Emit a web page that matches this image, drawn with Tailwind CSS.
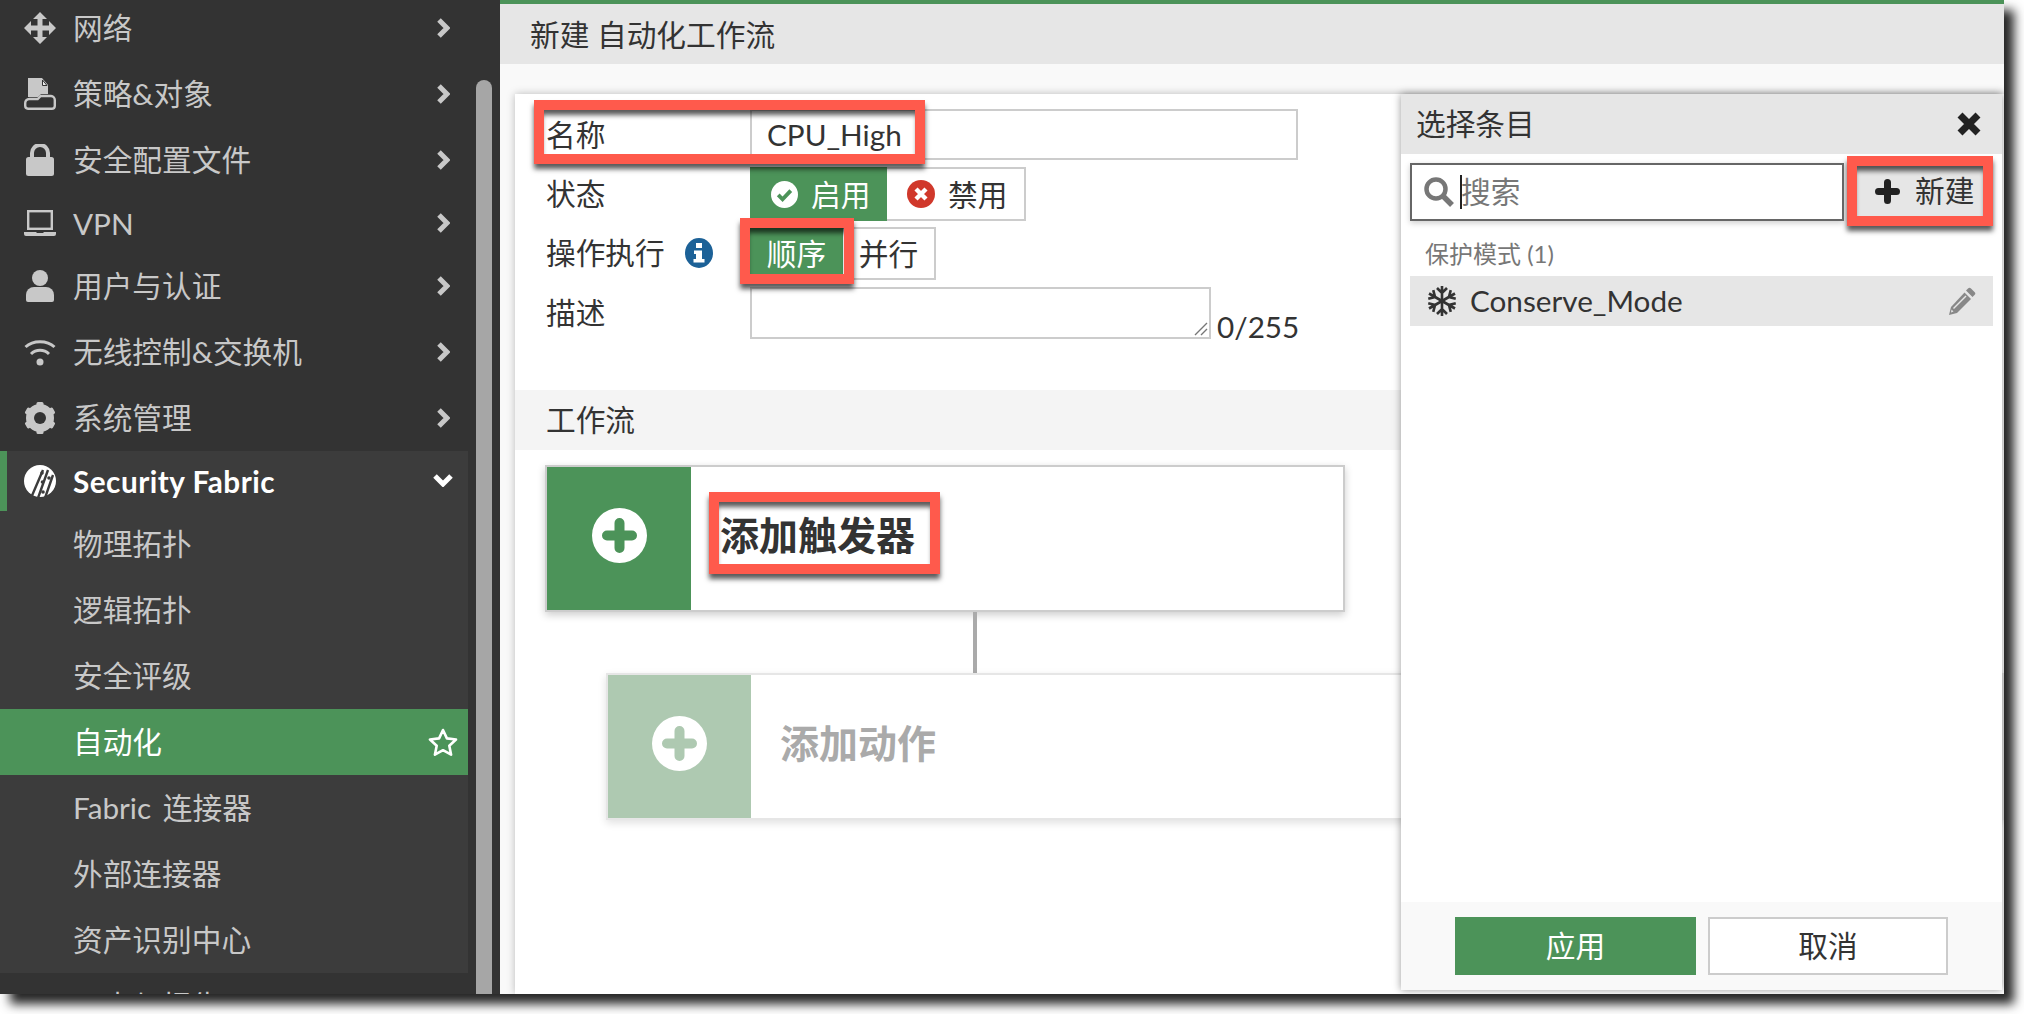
<!DOCTYPE html>
<html lang="zh-CN">
<head>
  <meta charset="UTF-8">
  <title>新建 自动化工作流</title>
  <script src="https://cdn.jsdelivr.net/npm/@tailwindcss/browser@4"></script>
</head>
<body class="bg-white w-[2024px] h-[1014px] overflow-hidden [font-family:Lato,'Noto_Sans_CJK_SC',sans-serif] text-[29.7px] text-[#333]">

  <div class="flex w-[2004px] h-[994px] overflow-hidden shadow-[10px_10px_10px_rgba(0,0,0,0.85)] bg-[#333]">

    <!-- Sidebar -->
    <aside class="relative w-[500px] shrink-0 bg-[#333] overflow-hidden text-[#c8c8c8]">
      <nav class="w-[468px] -mt-[5px]">
        <a class="flex items-center h-[66px] pl-[24px] pr-[18px]">
          <svg class="w-[32px] h-[32px] mr-[17px] shrink-0" viewBox="0 0 32 32" fill="#c8c8c8"><path d="M16 0l7 7h-4.500v6.500H25V9l7 7-7 7v-4.500h-6.500V25H23l-7 7-7-7h4.500v-6.500H7V23l-7-7 7-7v4.500h6.500V7H9z"/></svg>
          <span>网络</span>
          <svg class="ml-auto w-[14px] h-[20px]" viewBox="0 0 14 20" fill="none" stroke="#c8c8c8" stroke-width="5"><path d="M3 2l8 8-8 8"/></svg>
        </a>
        <a class="flex items-center h-[66px] pl-[24px] pr-[18px]">
          <svg class="w-[32px] h-[32px] mr-[17px] shrink-0" viewBox="0 0 32 32"><path d="M4 0h14l6 7v9H17l-3 3H4z" fill="#c8c8c8"/><path d="M18.500 2v5.500h4.500z" fill="#eee" stroke="#333" stroke-width="1"/><path d="M1.200 25a4 4 0 0 1 4-4h8.500l3-3H27a4 4 0 0 1 3.800 4v6a3 3 0 0 1-3 2.800H4a3 3 0 0 1-2.800-3z" fill="none" stroke="#c8c8c8" stroke-width="2.400"/></svg>
          <span>策略&amp;对象</span>
          <svg class="ml-auto w-[14px] h-[20px]" viewBox="0 0 14 20" fill="none" stroke="#c8c8c8" stroke-width="5"><path d="M3 2l8 8-8 8"/></svg>
        </a>
        <a class="flex items-center h-[66px] pl-[24px] pr-[18px]">
          <svg class="w-[32px] h-[32px] mr-[17px] shrink-0" viewBox="0 0 32 32"><rect x="2" y="13" width="28" height="19" rx="2.500" fill="#c8c8c8"/><path d="M8 14V9a8 8 0 0 1 16 0v5" fill="none" stroke="#c8c8c8" stroke-width="4"/></svg>
          <span>安全配置文件</span>
          <svg class="ml-auto w-[14px] h-[20px]" viewBox="0 0 14 20" fill="none" stroke="#c8c8c8" stroke-width="5"><path d="M3 2l8 8-8 8"/></svg>
        </a>
        <a class="flex items-center h-[60px] pl-[24px] pr-[18px]">
          <svg class="w-[32px] h-[26px] mr-[17px] shrink-0" viewBox="0 0 32 26"><rect x="4.200" y="1.200" width="23.600" height="17.600" fill="none" stroke="#c8c8c8" stroke-width="2.400"/><path d="M0 22h12l1 1h6l1-1h12v2a2 2 0 0 1-2 2H2a2 2 0 0 1-2-2z" fill="#c8c8c8"/></svg>
          <span class="mt-[2px]">VPN</span>
          <svg class="ml-auto w-[14px] h-[20px]" viewBox="0 0 14 20" fill="none" stroke="#c8c8c8" stroke-width="5"><path d="M3 2l8 8-8 8"/></svg>
        </a>
        <a class="flex items-center h-[66px] pl-[24px] pr-[18px]">
          <svg class="w-[32px] h-[32px] mr-[17px] shrink-0" viewBox="0 0 32 32" fill="#c8c8c8"><circle cx="16" cy="8" r="8"/><path d="M2 30v-5a8 8 0 0 1 8-8h12a8 8 0 0 1 8 8v5a2 2 0 0 1-2 2H4a2 2 0 0 1-2-2z"/></svg>
          <span>用户与认证</span>
          <svg class="ml-auto w-[14px] h-[20px]" viewBox="0 0 14 20" fill="none" stroke="#c8c8c8" stroke-width="5"><path d="M3 2l8 8-8 8"/></svg>
        </a>
        <a class="flex items-center h-[66px] pl-[24px] pr-[18px]">
          <svg class="w-[32px] h-[32px] mr-[17px] shrink-0" viewBox="0 0 32 32" fill="none" stroke="#c8c8c8" stroke-width="3"><path d="M1.500 11C9 4 23 4 30.500 11"/><path d="M7 18c5-5 13-5 18 0"/><circle cx="16" cy="26" r="3.500" fill="#c8c8c8" stroke="none"/></svg>
          <span>无线控制&amp;交换机</span>
          <svg class="ml-auto w-[14px] h-[20px]" viewBox="0 0 14 20" fill="none" stroke="#c8c8c8" stroke-width="5"><path d="M3 2l8 8-8 8"/></svg>
        </a>
        <a class="flex items-center h-[66px] pl-[24px] pr-[18px]">
          <svg class="w-[32px] h-[32px] mr-[17px] shrink-0" viewBox="0 0 32 32" fill="#c8c8c8"><circle cx="16" cy="16" r="10" fill="none" stroke="#c8c8c8" stroke-width="8"/><rect x="12.500" y="0" width="7" height="32" rx="1.500"/><rect x="12.500" y="0" width="7" height="32" rx="1.500" transform="rotate(60 16 16)"/><rect x="12.500" y="0" width="7" height="32" rx="1.500" transform="rotate(120 16 16)"/><circle cx="16" cy="16" r="6" fill="#333"/></svg>
          <span>系统管理</span>
          <svg class="ml-auto w-[14px] h-[20px]" viewBox="0 0 14 20" fill="none" stroke="#c8c8c8" stroke-width="5"><path d="M3 2l8 8-8 8"/></svg>
        </a>

        <div class="bg-[#3c3c3c]">
          <a class="flex items-center h-[60px] border-l-[7px] border-[#4c9359] pl-[17px] pr-[15px] text-white font-bold tracking-[0.5px]">
            <svg class="w-[32px] h-[32px] mr-[17px] shrink-0" viewBox="0 0 32 32"><circle cx="16" cy="16" r="16" fill="#fff"/><path d="M7 33L19 5M14 33L24 5M21 33L29 10" stroke="#3c3c3c" stroke-width="2.400"/><circle cx="18" cy="8" r="1.800" fill="#3c3c3c"/><circle cx="18.500" cy="17" r="1.800" fill="#3c3c3c"/><circle cx="25" cy="13" r="1.800" fill="#3c3c3c"/><circle cx="19" cy="27" r="1.800" fill="#3c3c3c"/></svg>
            <span class="mt-[2px]">Security Fabric</span>
            <svg class="ml-auto w-[20px] h-[14px] -mt-[3px]" viewBox="0 0 20 14" fill="none" stroke="#fff" stroke-width="5"><path d="M2 3l8 8 8-8"/></svg>
          </a>
          <a class="flex items-center h-[66px] pl-[73px]">物理拓扑</a>
          <a class="flex items-center h-[66px] pl-[73px]">逻辑拓扑</a>
          <a class="flex items-center h-[66px] pl-[73px]">安全评级</a>
          <a class="flex items-center h-[66px] pl-[73px] pr-[10px] bg-[#4c9359] text-white">
            <span>自动化</span>
            <svg class="ml-auto w-[30px] h-[28px]" viewBox="0 0 30 28" fill="none" stroke="#fff" stroke-width="2.600" stroke-linejoin="round"><path d="M15 2l3.900 8.400 9.100 1.100-6.700 6.200 1.800 9-8.100-4.500-8.100 4.500 1.800-9L2 11.500l9.100-1.100z"/></svg>
          </a>
          <a class="flex items-center h-[66px] pl-[73px] [word-spacing:4px]">Fabric 连接器</a>
          <a class="flex items-center h-[66px] pl-[73px]">外部连接器</a>
          <a class="flex items-center h-[66px] pl-[73px]">资产识别中心</a>
        </div>
        <a class="flex items-center h-[66px] pl-[73px]">日志与报告</a>
      </nav>
      <!-- scrollbar -->
      <div class="absolute left-[476px] top-[80px] w-[16px] h-[930px] rounded-t-[8px] bg-[#a6a6a6]"></div>
    </aside>

    <!-- Main -->
    <main class="relative flex-1 flex flex-col border-t-4 border-[#4c9359] bg-[#f9f9f9] overflow-hidden">
      <header class="h-[60px] shrink-0 flex items-center pl-[30px] pt-[2px] bg-[#e6e6e6]">新建 自动化工作流</header>

      <section class="relative flex-1 mt-[30px] ml-[15px] bg-white shadow-[0_0_8px_rgba(0,0,0,0.25)]">
        <div class="flex items-center h-[51px] mt-[15px] pl-[31px]">
          <label class="w-[204px] pt-[2px]">名称</label>
          <div class="w-[548px] h-[51px] flex items-center pl-[15px] pt-[2px] border-2 border-[#ccc] bg-white">CPU_High</div>
        </div>
        <div class="flex items-center h-[54px] mt-[7px] pl-[31px]">
          <label class="w-[204px]">状态</label>
          <div class="flex h-full">
            <div class="w-[137px] flex items-center pl-[21px] bg-[#4c9359] text-white">
              <svg class="w-[27px] h-[27px] mr-[13px]" viewBox="0 0 28 28"><circle cx="14" cy="14" r="14" fill="#fff"/><path d="M7.500 14.500l4.500 4.500 8.500-9" fill="none" stroke="#4c9359" stroke-width="4"/></svg>
              <span class="mt-[2px]">启用</span>
            </div>
            <div class="w-[139px] flex items-center pl-[20px] border-2 border-l-0 border-[#ccc]">
              <svg class="w-[28px] h-[28px] mr-[13px]" viewBox="0 0 28 28"><circle cx="14" cy="14" r="14" fill="#d0382b"/><path d="M9 9l10 10M19 9L9 19" fill="none" stroke="#fff" stroke-width="4.400"/></svg>
              <span class="mt-[2px]">禁用</span>
            </div>
          </div>
        </div>
        <div class="flex items-center h-[53px] mt-[6px] pl-[31px]">
          <label class="w-[204px] flex items-center">
            <span>操作执行</span>
            <svg class="w-[28px] h-[30px] ml-[20px]" viewBox="0 0 28 30"><ellipse cx="14" cy="15" rx="14" ry="15" fill="#1c6197"/><rect x="11" y="5" width="6" height="5" fill="#fff"/><path d="M9 12.500h8V21h2.500v3.500h-11V21H11v-5H9z" fill="#fff"/></svg>
          </label>
          <div class="flex h-full">
            <div class="w-[93px] flex items-center justify-center pt-[2px] bg-[#4c9359] text-white">顺序</div>
            <div class="w-[93px] flex items-center justify-center pt-[2px] border-2 border-l-0 border-[#ccc]">并行</div>
          </div>
        </div>
        <div class="flex h-[52px] mt-[7px] pl-[31px]">
          <label class="w-[204px] flex items-center">描述</label>
          <div class="relative w-[461px] h-full border-2 border-[#ccc]">
            <svg class="absolute right-[1px] bottom-[1px] w-[14px] h-[14px]" viewBox="0 0 14 14" stroke="#777" stroke-width="1.400"><path d="M1 13L13 1M7 13l6-6"/></svg>
          </div>
          <span class="self-end ml-[6px] -mb-[11px]">0/255</span>
        </div>

        <div class="flex items-center h-[60px] mt-[51px] pl-[31px] bg-[#f4f4f4]">工作流</div>

        <!-- Trigger card -->
        <div class="flex h-[147px] w-[800px] mt-[15px] ml-[30px] border-2 border-[#ccc] bg-white shadow-[0_3px_8px_rgba(0,0,0,0.2)]">
          <div class="w-[144px] flex items-center justify-center pb-[6px] bg-[#4c9359]">
            <svg class="w-[55px] h-[55px]" viewBox="0 0 55 55"><circle cx="27.500" cy="27.500" r="27.500" fill="#fff"/><path d="M27.500 15v25M15 27.500h25" stroke="#4c9359" stroke-width="10" stroke-linecap="round"/></svg>
          </div>
          <div class="flex items-center pl-[29px] pb-[6px] font-bold text-[39px]">添加触发器</div>
        </div>
        <div class="w-[4px] h-[61px] ml-[458px] bg-[#aaa]"></div>
        <!-- Action card -->
        <div class="flex h-[147px] ml-[91px] border-2 border-[#e6e6e6] bg-white shadow-[0_3px_8px_rgba(0,0,0,0.12)]">
          <div class="w-[143px] flex items-center justify-center pb-[6px] bg-[#aec9b1]">
            <svg class="w-[55px] h-[55px]" viewBox="0 0 55 55"><circle cx="27.500" cy="27.500" r="27.500" fill="#fff"/><path d="M27.500 15v25M15 27.500h25" stroke="#aec9b1" stroke-width="10" stroke-linecap="round"/></svg>
          </div>
          <div class="flex items-center pl-[29px] pb-[6px] font-bold text-[39px] text-[#aaa]">添加动作</div>
        </div>

        <!-- Red annotation boxes -->
        <div class="absolute left-[19px] top-[6px] w-[391px] h-[64px] border-[10px] border-[#ff5a4c] shadow-[0_5px_5px_rgba(0,0,0,0.65),inset_0_7px_5px_-2px_rgba(0,0,0,0.65)]"></div>
        <div class="absolute left-[225px] top-[124px] w-[114px] h-[66px] border-[10px] border-[#ff5a4c] shadow-[0_5px_5px_rgba(0,0,0,0.65),inset_0_7px_5px_-2px_rgba(0,0,0,0.65)]"></div>
        <div class="absolute left-[194px] top-[398px] w-[231px] h-[82px] border-[10px] border-[#ff5a4c] shadow-[0_5px_5px_rgba(0,0,0,0.65),inset_0_7px_5px_-2px_rgba(0,0,0,0.65)]"></div>
      </section>

      <!-- Select entries drawer -->
      <aside class="absolute left-[901px] top-[90px] w-[601px] h-[896px] flex flex-col bg-white shadow-[0_0_8px_rgba(0,0,0,0.4)]">
        <div class="h-[60px] shrink-0 flex items-center pl-[15px] pr-[21px] bg-[#e6e6e6]">
          <span>选择条目</span>
          <svg class="ml-auto w-[24px] h-[24px]" viewBox="0 0 24 24" stroke="#222" stroke-width="7"><path d="M3 3l18 18M21 3L3 21"/></svg>
        </div>
        <div class="flex items-center h-[70px] mt-[2px] pl-[9px]">
          <div class="relative w-[434px] h-[58px] mt-[2px] flex items-center pl-[12px] border-2 border-[#666] bg-white shadow-[0_2px_6px_rgba(0,0,0,0.2)] text-[#777]">
            <svg class="w-[30px] h-[30px] mr-[7px] shrink-0" viewBox="0 0 30 30" fill="none" stroke="#777" stroke-width="4.500"><circle cx="12" cy="12" r="9.500"/><path d="M19 19l9 9" stroke-width="5.500"/></svg>
            <span>搜索</span>
            <span class="absolute left-[48px] top-[10px] w-[2px] h-[34px] bg-[#222]"></span>
          </div>
          <div class="w-[146px] h-[70px] ml-[3px] flex items-center pl-[18px] border-[10px] border-[#ff5a4c] bg-[#e6e6e6] shadow-[0_5px_5px_rgba(0,0,0,0.65),inset_0_7px_5px_-2px_rgba(0,0,0,0.65)]">
            <svg class="w-[25px] h-[25px] mr-[15px] shrink-0" viewBox="0 0 25 25" stroke="#222" stroke-width="7" stroke-linecap="round"><path d="M12.500 3.500v18M3.500 12.500h18"/></svg>
            <span>新建</span>
          </div>
        </div>
        <div class="h-[50px] flex items-center pl-[24px] pt-[5px] text-[24px] text-[#777]">保护模式 (1)</div>
        <div class="h-[50px] mx-[9px] flex items-center pl-[17px] pr-[17px] bg-[#e6e6e6]">
          <svg class="w-[30px] h-[32px] mr-[13px] shrink-0" viewBox="0 0 30 32" fill="none" stroke="#333" stroke-width="2.600">
            <g><path d="M15 16V1M10 3l5 5 5-5"/></g>
            <g transform="rotate(60 15 16)"><path d="M15 16V1M10 3l5 5 5-5"/></g>
            <g transform="rotate(120 15 16)"><path d="M15 16V1M10 3l5 5 5-5"/></g>
            <g transform="rotate(180 15 16)"><path d="M15 16V1M10 3l5 5 5-5"/></g>
            <g transform="rotate(240 15 16)"><path d="M15 16V1M10 3l5 5 5-5"/></g>
            <g transform="rotate(300 15 16)"><path d="M15 16V1M10 3l5 5 5-5"/></g>
          </svg>
          <span>Conserve_Mode</span>
          <svg class="ml-auto w-[28px] h-[28px]" viewBox="0 0 28 28" fill="#888"><path d="M20 1.500a2 2 0 0 1 3 0l3.500 3.500a2 2 0 0 1 0 3l-2 2-6.500-6.500z"/><path d="M16.500 5.500l6.500 6.500L9 26l-8 2 2-8z"/><path d="M5.500 21.500L18 9" stroke="#e6e6e6" stroke-width="1.500"/><path d="M3.500 22.500l2 2-2.500 1z" fill="#e6e6e6"/></svg>
        </div>
        <div class="mt-auto h-[88px] shrink-0 flex items-center pl-[54px] gap-[12px] bg-[#f9f9f9]">
          <div class="w-[241px] h-[58px] flex items-center justify-center bg-[#4c9359] text-white">应用</div>
          <div class="w-[240px] h-[58px] flex items-center justify-center border-2 border-[#ccc] bg-white">取消</div>
        </div>
      </aside>
    </main>
  </div>
</body>
</html>
